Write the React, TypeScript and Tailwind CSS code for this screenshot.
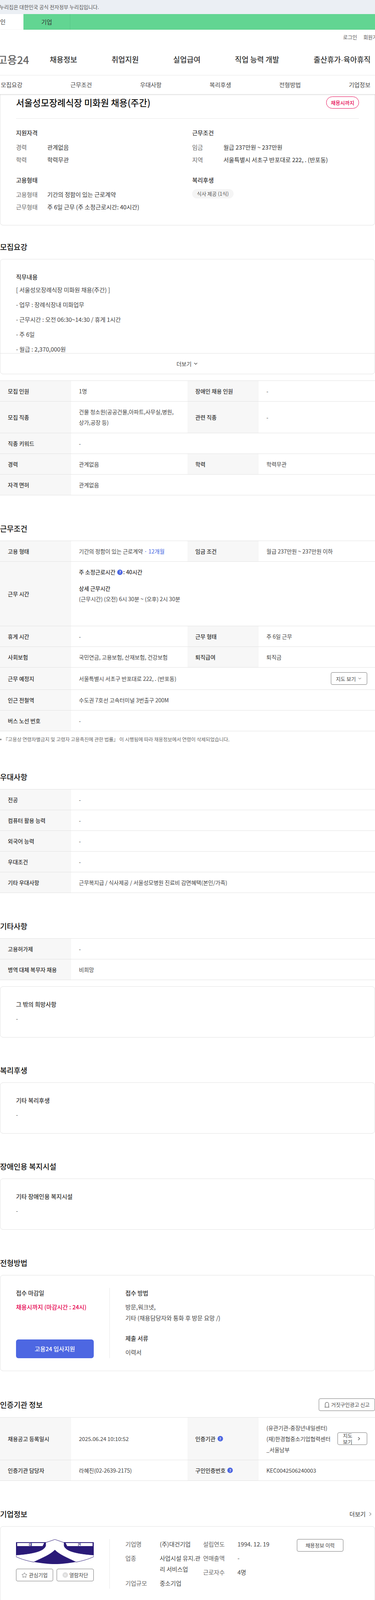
import { type ReactNode } from "react";
import { ChevronDown, ChevronRight, Star } from "lucide-react";

function Help() {
  return (
    <span className="inline-flex h-[14px] w-[14px] shrink-0 items-center justify-center rounded-full bg-[#4d67e2] text-[9px] font-bold leading-none text-white">?</span>
  );
}

function Heading({ children, className = "" }: { children: ReactNode; className?: string }) {
  return <h2 className={`h-[28px] text-[19px] font-medium leading-[28px] text-[#111] ${className}`}>{children}</h2>;
}

function Th({ children }: { children: ReactNode }) {
  return <div className="flex items-center bg-[#f7f7f7] px-5 text-[14px] font-medium leading-[27px] text-[#333]">{children}</div>;
}

function Td({ children, wide = false }: { children: ReactNode; wide?: boolean }) {
  return <div className={`flex items-center px-5 text-[14px] leading-[27px] text-[#444] ${wide ? "col-span-3" : ""}`}>{children}</div>;
}

function Row({ children, tall = "min-h-[53px]" }: { children: ReactNode; tall?: string }) {
  return <div className={`grid grid-cols-[182px_298px_182px_298px] border-b border-[#e2e2e2] ${tall}`}>{children}</div>;
}

function Card({ children, className = "" }: { children: ReactNode; className?: string }) {
  return <div className={`rounded-lg border border-[#e2e2e2] ${className}`}>{children}</div>;
}

function TextCard({ title }: { title: string }) {
  return (
    <Card className="mt-[17px] h-[131px] px-10 pt-[33px]">
      <div className="text-[15px] font-medium leading-[24px] text-[#333]">{title}</div>
      <div className="mt-3 text-[14px] leading-[24px] text-[#444]">-</div>
    </Card>
  );
}

function Info({ label, value }: { label: string; value: ReactNode }) {
  return (
    <div className="flex h-[32px] items-center text-[15px]">
      <span className="w-[80px] text-[#666]">{label}</span>
      <span className="text-[#333]">{value}</span>
    </div>
  );
}

function OutlineButton({ children, className = "" }: { children: ReactNode; className?: string }) {
  return (
    <button className={`flex h-[32px] items-center justify-center rounded border border-[#777] bg-white text-[13px] text-[#444] ${className}`}>{children}</button>
  );
}

function CompanyLogo() {
  return (
    <svg viewBox="0 0 199 64" className="h-[64px] w-[199px]">
      <path d="M0 8H199V43C180 56 130 64 99.5 64C69 64 19 56 0 43Z" fill="#2a1a78" />
      <path d="M3 10H72L68 18H3Z M127 10H196V18H131Z" fill="#fff" />
      <text x="37" y="17.5" textAnchor="middle" fontSize="9" fontWeight="700" fill="#2a1a78" textLength="30">대</text>
      <text x="162" y="17.5" textAnchor="middle" fontSize="9" fontWeight="700" fill="#2a1a78" textLength="30">건</text>
      <path d="M99.5 1L76 9V17C72 32 40 38 0 41V45C14 52 30 56 45 59C68 48 88 40 99.5 28C111 40 131 48 154 59C169 56 185 52 199 45V41C159 38 127 32 123 17V9Z" fill="#fff" stroke="#2a1a78" strokeWidth="1" />
    </svg>
  );
}

export default function App() {
  return (
    <div className="w-[960px] overflow-hidden bg-white font-['Noto_Sans_CJK_KR',sans-serif] text-[#333]">
      <div className="flex h-[36px] items-center overflow-hidden whitespace-nowrap bg-[#ebeff4] text-[13px] text-[#555]">
        <span className="-ml-[16px]">이 누리집은 대한민국 공식 전자정부 누리집입니다.</span>
      </div>
      <div className="flex h-[40px] bg-[#62d592] text-[15px] text-[#333]">
        <div className="-ml-[59px] flex w-[119px] items-center justify-center bg-white">개인</div>
        <div className="flex w-[120px] items-center justify-center border-r border-[#58c687]">기업</div>
      </div>

      <div className="relative z-10 bg-white shadow-[0_1px_3px_rgba(0,0,0,0.2)]">
        <div className="flex h-[38px] items-center justify-end gap-4 whitespace-nowrap text-[13px] text-[#555]">
          <span>로그인</span>
          <span className="-mr-[18px]">회원가입</span>
        </div>
        <div className="flex h-[79px] items-center whitespace-nowrap border-b border-[#e8e8e8] text-[19px] font-medium text-[#333]">
          <span className="-ml-[6px] mr-[53px] text-[27px] font-medium text-[#666]">고용24</span>
          <nav className="flex gap-[88px]">
            <span>채용정보</span>
            <span>취업지원</span>
            <span>실업급여</span>
            <span>직업 능력 개발</span>
            <span>출산휴가<span className="font-['Liberation_Sans',sans-serif]">·</span>육아휴직</span>
          </nav>
        </div>
        <div className="flex h-[48px] items-center gap-[123px] whitespace-nowrap pl-[2px] text-[15px] text-[#444]">
          <span>모집요강</span>
          <span>근무조건</span>
          <span>우대사항</span>
          <span>복리후생</span>
          <span>전형방법</span>
          <span>기업정보</span>
        </div>
      </div>

      <div className="rounded-b-lg border border-t-0 border-[#e2e2e2] px-10 pb-[30px] pt-[6px]">
        <div className="flex h-[31px] items-center justify-between">
          <h1 className="text-[23px] font-medium text-[#111]">서울성모장례식장 미화원 채용(주간)</h1>
          <span className="flex h-[31px] w-[84px] items-center justify-center rounded-full border border-[#e6004f] text-[13px] font-medium text-[#e6004f]">채용시까지</span>
        </div>
        <div className="mt-[25px] border-t border-[#e8e8e8]" />
        <div className="mt-[24px] grid grid-cols-[451px_1fr]">
          <div>
            <div className="mb-[9px] text-[15px] font-medium leading-[24px] text-[#333]">지원자격</div>
            <Info label="경력" value="관계없음" />
            <Info label="학력" value="학력무관" />
            <div className="mb-[9px] mt-[24px] text-[15px] font-medium leading-[24px] text-[#333]">고용형태</div>
            <Info label="고용형태" value="기간의 정함이 있는 근로계약" />
            <Info label="근무형태" value="주 6일 근무 (주 소정근로시간: 40시간)" />
          </div>
          <div>
            <div className="mb-[9px] text-[15px] font-medium leading-[24px] text-[#333]">근무조건</div>
            <Info label="임금" value="월급 237만원 ~ 237만원" />
            <Info label="지역" value="서울특별시 서초구 반포대로 222, . (반포동)" />
            <div className="mb-[9px] mt-[24px] text-[15px] font-medium leading-[24px] text-[#333]">복리후생</div>
            <span className="mt-[2px] inline-flex h-[24px] items-center rounded-full bg-[#f5f5f5] px-3 text-[13px] text-[#555]">식사 제공 (1식)</span>
          </div>
        </div>
      </div>

      <Heading className="mt-[41px]">모집요강</Heading>
      <Card className="mt-[17px]">
        <div className="h-[240px] overflow-hidden px-10 pt-[33px]">
          <div className="text-[15px] font-medium leading-[24px] text-[#333]">직무내용</div>
          <div className="mt-[2px] text-[15px] leading-[38px] text-[#444]">
            <p>[ 서울성모장례식장 미화원 채용(주간) ]</p>
            <p>- 업무 : 장례식장내 미화업무</p>
            <p>- 근무시간 : 오전 06:30~14:30 / 휴게 1시간</p>
            <p>- 주 6일</p>
            <p>- 월급 : 2,370,000원</p>
          </div>
        </div>
        <button className="flex h-[53px] w-full items-center justify-center gap-1 border-t border-[#e2e2e2] text-[14px] text-[#444]">
          더보기 <ChevronDown size={14} strokeWidth={2} />
        </button>
      </Card>

      <div className="mt-4 border-t border-[#e2e2e2]">
        <Row><Th>모집 인원</Th><Td>1명</Td><Th>장애인 채용 인원</Th><Td>-</Td></Row>
        <Row tall="min-h-[81px]"><Th>모집 직종</Th><Td><span>건물 청소원(공공건물,아파트,사무실,병원,<br />상가,공장 등)</span></Td><Th>관련 직종</Th><Td>-</Td></Row>
        <Row><Th>직종 키워드</Th><Td wide>-</Td></Row>
        <Row><Th>경력</Th><Td>관계없음</Td><Th>학력</Th><Td>학력무관</Td></Row>
        <Row><Th>자격 면허</Th><Td wide>관계없음</Td></Row>
      </div>

      <Heading className="mt-[71px]">근무조건</Heading>
      <div className="mt-[17px] border-t border-[#e2e2e2]">
        <Row><Th>고용 형태</Th><Td><span>기간의 정함이 있는 근로계약 <span className="text-[#3f63e0]">· 12개월</span></span></Td><Th>임금 조건</Th><Td>월급 237만원 ~ 237만원 이하</Td></Row>
        <Row tall="min-h-[165px]">
          <Th>근무 시간</Th>
          <div className="col-span-3 px-5 pt-[13px] text-[14px] leading-[27px] text-[#444]">
            <div className="flex items-center font-medium text-[#333]"><span className="mr-[5px]">주 소정근로시간</span><Help /><span className="ml-px">: 40시간</span></div>
            <div className="mt-[15px] font-medium text-[#333]">상세 근무시간</div>
            <div>(근무시간) (오전) 6시 30분 ~ (오후) 2시 30분</div>
          </div>
        </Row>
        <Row><Th>휴게 시간</Th><Td>-</Td><Th>근무 형태</Th><Td>주 6일 근무</Td></Row>
        <Row><Th>사회보험</Th><Td>국민연금, 고용보험, 산재보험, 건강보험</Td><Th>퇴직급여</Th><Td>퇴직금</Td></Row>
        <Row tall="min-h-[57px]">
          <Th>근무 예정지</Th>
          <Td wide>
            <span className="flex-1">서울특별시 서초구 반포대로 222, . (반포동)</span>
            <OutlineButton className="w-[93px] gap-1">지도 보기 <ChevronDown size={12} /></OutlineButton>
          </Td>
        </Row>
        <Row><Th>인근 전철역</Th><Td wide>수도권 7호선 고속터미널 3번출구 200M</Td></Row>
        <Row><Th>버스 노선 번호</Th><Td wide>-</Td></Row>
      </div>
      <p className="mt-[11px] flex h-[20px] items-center gap-[4px] whitespace-nowrap text-[12.5px] leading-[20px] text-[#666]">
        <span className="h-[4px] w-[4px] shrink-0 rounded-full bg-[#888]" />
        『고용상 연령차별금지 및 고령자 고용촉진에 관한 법률』 이 시행됨에 따라 채용정보에서 연령이 삭제되었습니다.
      </p>

      <Heading className="mt-[72px]">우대사항</Heading>
      <div className="mt-[17px] border-t border-[#e2e2e2]">
        <Row><Th>전공</Th><Td wide>-</Td></Row>
        <Row><Th>컴퓨터 활용 능력</Th><Td wide>-</Td></Row>
        <Row><Th>외국어 능력</Th><Td wide>-</Td></Row>
        <Row><Th>우대조건</Th><Td wide>-</Td></Row>
        <Row><Th>기타 우대사항</Th><Td wide>근무복지급 / 식사제공 / 서울성모병원 진료비 감면혜택(본인/가족)</Td></Row>
      </div>

      <Heading className="mt-[71px]">기타사항</Heading>
      <div className="mt-[17px] border-t border-[#e2e2e2]">
        <Row><Th>고용허가제</Th><Td wide>-</Td></Row>
        <Row><Th>병역 대체 복무자 채용</Th><Td wide>비희망</Td></Row>
      </div>
      <Card className="mt-4 h-[131px] px-10 pt-[33px]">
        <div className="text-[15px] font-medium leading-[24px] text-[#333]">그 밖의 희망사항</div>
        <div className="mt-3 text-[14px] leading-[24px] text-[#444]">-</div>
      </Card>

      <Heading className="mt-[70px]">복리후생</Heading>
      <TextCard title="기타 복리후생" />

      <Heading className="mt-[70px]">장애인용 복지시설</Heading>
      <TextCard title="기타 장애인용 복지시설" />

      <Heading className="mt-[71px]">전형방법</Heading>
      <Card className="mt-[17px] flex h-[246px] px-10 py-[32px] text-[15px] leading-[26px]">
        <div className="flex h-[180px] w-[240px] flex-col justify-between border-r border-[#e8e8e8] pr-10">
          <div>
            <div className="font-medium text-[#333]">접수 마감일</div>
            <div className="mt-[10px] whitespace-nowrap font-medium text-[#e6004f]">채용시까지 (마감시간 : 24시)</div>
          </div>
          <button className="h-[48px] rounded-md bg-[#4d67e2] font-medium text-white">고용24 입사지원</button>
        </div>
        <div className="pl-10 text-[#444]">
          <div className="font-medium text-[#333]">접수 방법</div>
          <div className="mt-[10px]">방문,워크넷,</div>
          <div className="mt-[2px]">기타 (채용담당자와 통화 후 방문 요망 /)</div>
          <div className="mt-[26px] font-medium text-[#333]">제출 서류</div>
          <div className="mt-[10px]">이력서</div>
        </div>
      </Card>

      <div className="mt-[70px] flex items-center justify-between">
        <Heading>인증기관 정보</Heading>
        <OutlineButton className="w-[144px] gap-1">
          <svg width="14" height="18" viewBox="0 0 14 18" fill="none" stroke="currentColor" strokeWidth="1.1">
            <path d="M2.5 15V7.5a4.5 4.5 0 0 1 9 0V15M1 15.5h12" />
          </svg>
          거짓구인광고 신고
        </OutlineButton>
      </div>
      <div className="mt-4 border-t border-[#e2e2e2]">
        <Row tall="min-h-[109px]">
          <Th>채용공고 등록일시</Th>
          <Td>2025.06.24 10:10:52</Td>
          <Th><span className="flex items-center gap-[5px]">인증기관 <Help /></span></Th>
          <div className="flex flex-col justify-center px-5 text-[14px] leading-[28px] text-[#444]">
            <div>(유관기관-중장년내일센터)</div>
            <div className="flex h-[28px] items-center justify-between whitespace-nowrap">
              (재)한경협중소기업협력센터
              <button className="flex h-[32px] w-[76px] shrink-0 items-center justify-center gap-[10px] rounded border border-[#777] text-[13px] leading-[16px] text-[#444]">
                <span>지도<br />보기</span>
                <ChevronRight size={14} />
              </button>
            </div>
            <div>_서울남부</div>
          </div>
        </Row>
        <Row>
          <Th>인증기관 담당자</Th>
          <Td>라혜진(02-2639-2175)</Td>
          <Th><span className="flex items-center gap-[5px]">구인인증번호 <Help /></span></Th>
          <Td>KEC0042506240003</Td>
        </Row>
      </div>

      <div className="mt-[71px] flex items-center justify-between">
        <Heading>기업정보</Heading>
        <span className="flex items-center gap-1 pr-[4px] text-[15px] text-[#333]">더보기 <ChevronRight size={16} strokeWidth={1.5} /></span>
      </div>
      <Card className="mt-[17px] flex h-[194px] px-10 pt-[32px]">
        <div className="h-[127px] w-[240px] border-r border-[#e8e8e8] pr-10">
          <CompanyLogo />
          <div className="mt-3 flex justify-between">
            <OutlineButton className="w-[95px] gap-1 text-[13px]"><Star size={15} strokeWidth={1.3} />관심기업</OutlineButton>
            <OutlineButton className="w-[95px] gap-1 text-[13px]">
              <span className="flex h-[14px] w-[14px] items-center justify-center rounded-full bg-[#ddd] text-[10px] leading-none text-white">×</span>
              열람차단
            </OutlineButton>
          </div>
        </div>
        <div className="-mt-px w-[239px] pl-10 text-[15px] leading-[28px] text-[#444]">
          <div className="flex"><span className="w-[88px] text-[#666]">기업명</span><span>(주)대건기업</span></div>
          <div className="mt-2 flex"><span className="w-[88px] shrink-0 text-[#666]">업종</span><span className="whitespace-nowrap">사업시설 유지.관<br />리 서비스업</span></div>
          <div className="mt-2 flex"><span className="w-[88px] text-[#666]">기업규모</span><span>중소기업</span></div>
        </div>
        <div className="-mt-px w-[240px] text-[15px] leading-[28px] text-[#444]">
          <div className="flex"><span className="w-[88px] text-[#666]">설립연도</span><span>1994. 12. 19</span></div>
          <div className="mt-2 flex"><span className="w-[88px] text-[#666]">연매출액</span><span>-</span></div>
          <div className="mt-2 flex"><span className="w-[88px] text-[#666]">근로자수</span><span>4명</span></div>
        </div>
        <OutlineButton className="w-[119px]">채용정보 이력</OutlineButton>
      </Card>
    </div>
  );
}
